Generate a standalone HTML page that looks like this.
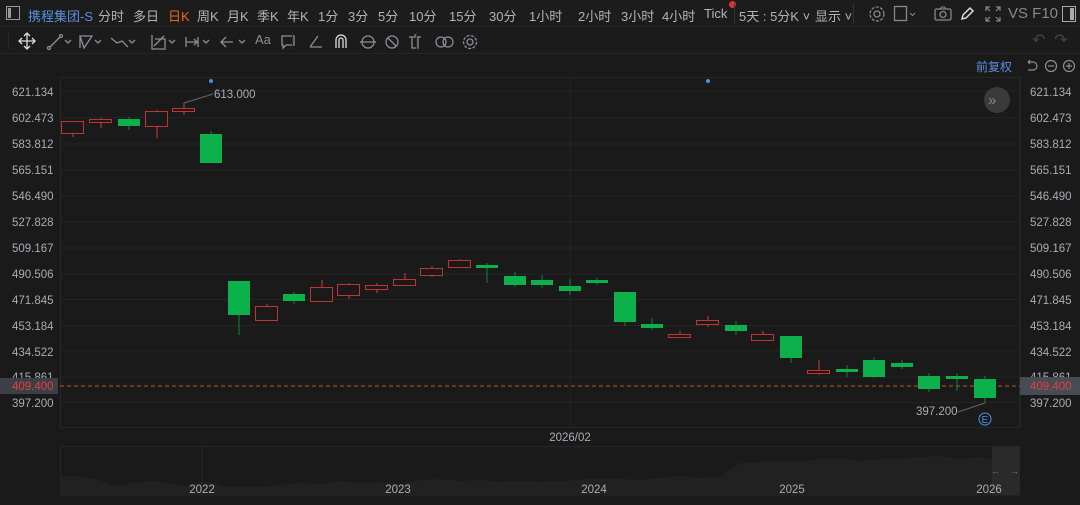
<!DOCTYPE html>
<html><head><meta charset="utf-8"><style>
*{margin:0;padding:0;box-sizing:border-box}
body{width:1080px;height:505px;background:#1a1a1a;font-family:"Liberation Sans","Noto Sans CJK SC",sans-serif;overflow:hidden;position:relative;color:#b8bcc4}
.bar1{position:absolute;left:0;top:0;width:1080px;height:27px;background:#1c1c1c;border-bottom:1px solid #262626}
.bar2{position:absolute;left:0;top:27px;width:1080px;height:27px;background:#1b1b1b;border-bottom:1px solid #262626}
.t{position:absolute;top:6px;font-size:13px;color:#b0b4bc;white-space:nowrap}
</style></head><body>
<div class="bar1">
<svg style="position:absolute;left:6px;top:6px" width="14" height="14"><rect x="0.5" y="0.5" width="13" height="13" fill="none" stroke="#999" /><rect x="2" y="2" width="3" height="10" fill="#999"/></svg>
<span class="t" style="left:28px;color:#5a8fe0">携程集团-S</span>
<span class="t" style="left:98px">分时</span>
<span class="t" style="left:133px">多日</span>
<span class="t" style="left:168px;color:#f0641e">日K</span>
<span class="t" style="left:197px">周K</span>
<span class="t" style="left:227px">月K</span>
<span class="t" style="left:257px">季K</span>
<span class="t" style="left:287px">年K</span>
<span class="t" style="left:318px">1分</span>
<span class="t" style="left:348px">3分</span>
<span class="t" style="left:378px">5分</span>
<span class="t" style="left:409px">10分</span>
<span class="t" style="left:449px">15分</span>
<span class="t" style="left:489px">30分</span>
<span class="t" style="left:529px">1小时</span>
<span class="t" style="left:578px">2小时</span>
<span class="t" style="left:621px">3小时</span>
<span class="t" style="left:662px">4小时</span>
<span class="t" style="left:704px">Tick</span>
<div style="position:absolute;left:729px;top:1px;width:7px;height:7px;border-radius:50%;background:#d33"></div>
<div style="position:absolute;left:734px;top:4px;width:1px;height:20px;background:#333"></div>
<span class="t" style="left:739px">5天 : 5分K ˅</span>
<span class="t" style="left:815px">显示 ˅</span>
<div style="position:absolute;left:853px;top:4px;width:1px;height:20px;background:#333"></div>
<svg style="position:absolute;left:868px;top:5px" width="18" height="18"><circle cx="9" cy="9" r="3" fill="none" stroke="#888" stroke-width="1.3"/><circle cx="9" cy="9" r="7" fill="none" stroke="#888" stroke-width="1.3" stroke-dasharray="3 1.5"/></svg>
<svg style="position:absolute;left:893px;top:5px" width="24" height="18"><rect x="1.5" y="1.5" width="12" height="14" fill="none" stroke="#888" stroke-width="1.3"/><path d="M17 8l2.5 2.5L22 8" stroke="#888" fill="none"/></svg>
<svg style="position:absolute;left:933px;top:5px" width="20" height="18"><rect x="2" y="4" width="16" height="11" rx="1.5" fill="none" stroke="#888" stroke-width="1.3"/><circle cx="10" cy="9.5" r="3" fill="none" stroke="#888" stroke-width="1.3"/><path d="M7 4l1.5-2h3L13 4" stroke="#888" fill="none"/></svg>
<svg style="position:absolute;left:958px;top:5px" width="18" height="18"><path d="M4 14l1-4 7-7 3 3-7 7z" fill="none" stroke="#ddd" stroke-width="1.5"/></svg>
<svg style="position:absolute;left:984px;top:5px" width="18" height="18"><path d="M2 6V2h4M12 2h4v4M16 12v4h-4M6 16H2v-4M2 2l4 4M16 2l-4 4M16 16l-4-4M2 16l4-4" stroke="#888" fill="none" stroke-width="1.2"/></svg>
<span class="t" style="left:1008px;font-size:15px;top:5px;color:#888">VS F10</span>
<svg style="position:absolute;left:1062px;top:6px" width="14" height="16"><rect x="0.5" y="0.5" width="13" height="15" fill="none" stroke="#aaa"/><rect x="8" y="2" width="4" height="12" fill="#aaa"/></svg>
</div>
<div class="bar2">
<svg style="position:absolute;left:14px;top:3px" width="480" height="22" fill="none" stroke="#8a8e96" stroke-width="1.3">
<path d="M13 3v16M5 11h16M10 6l3-3 3 3M10 16l3 3 3-3M8 8l-3 3 3 3M18 8l3 3-3 3" stroke="#ddd"/>
<path d="M36 17l10-10" /><circle cx="35" cy="18" r="1.5"/><circle cx="47" cy="6" r="1.5"/><path d="M51 10l3 3 3-3"/>
<path d="M66 6h12l-8 12zM66 6v12" /><path d="M81 10l3 3 3-3"/>
<path d="M97 8l6 5 5-2 6 6"/><path d="M115 10l3 3 3-3"/>
<path d="M138 5v14h14M140 16l10-10M141 9h10v9"/><path d="M155 10l3 3 3-3"/>
<path d="M172 7v10M172 12h12M184 7v10M180 9l3 3-3 3"/><path d="M189 10l3 3 3-3"/>
<path d="M207 12h12M212 7l-5 5 5 5"/><path d="M225 10l3 3 3-3"/>
<path d="M268 6h12v9h-8l-3 3v-3h-1z"/>
<path d="M296 17l8-11M296 17h12"/>
<path d="M322 18v-8a5 5 0 0 1 10 0v8M325 18v-8a2 2 0 0 1 4 0v8" stroke="#ddd"/>
<circle cx="354" cy="12" r="6"/><path d="M346 12h16"/>
<circle cx="378" cy="12" r="6"/><path d="M374 8l8 8"/>
<path d="M395 7h12M398 7v11h6V7M400 5h2"/>
<circle cx="427" cy="12" r="5"/><circle cx="434" cy="12" r="5"/>
<circle cx="456" cy="12" r="3"/><circle cx="456" cy="12" r="6.5" stroke-dasharray="3 1.5"/>
</svg>
<span style="position:absolute;left:255px;top:5px;font-size:13px;color:#8a8e96">Aa</span>
<div style="position:absolute;left:8px;top:5px;width:1px;height:17px;background:#2a2a2a"></div>
<div style="position:absolute;left:292px;top:5px;width:1px;height:17px;background:#2a2a2a"></div>
<div style="position:absolute;left:416px;top:5px;width:1px;height:17px;background:#2a2a2a"></div>
<span style="position:absolute;left:1032px;top:3px;color:#444;font-size:16px">↶ &nbsp;↷</span>
</div>
<span style="position:absolute;left:976px;top:58px;font-size:12px;color:#5a8fe0">前复权</span>
<svg style="position:absolute;left:1024px;top:58px" width="56" height="16" fill="none" stroke="#8a8e96" stroke-width="1.2"><path d="M4 4h5a4 4 0 0 1 0 8H4M4 4l2-2M4 4l2 2"/><circle cx="27" cy="8" r="5.5"/><path d="M24 8h6"/><circle cx="45" cy="8" r="5.5"/><path d="M42 8h6M45 5v6"/></svg>
<svg style="position:absolute;left:0;top:0" width="1080" height="505" font-family="Liberation Sans" font-size="11.5">
<rect x="60.5" y="77.5" width="959" height="350" fill="none" stroke="#262626"/>
<line x1="1020" y1="77" x2="1020" y2="427" stroke="#2a2a2a"/>
<g stroke="#242424">
<line x1="60" y1="91" x2="1020" y2="91"/><line x1="60" y1="117.5" x2="1020" y2="117.5"/><line x1="60" y1="144" x2="1020" y2="144"/><line x1="60" y1="170" x2="1020" y2="170"/><line x1="60" y1="196" x2="1020" y2="196"/><line x1="60" y1="222" x2="1020" y2="222"/><line x1="60" y1="248" x2="1020" y2="248"/><line x1="60" y1="274" x2="1020" y2="274"/><line x1="60" y1="299.5" x2="1020" y2="299.5"/><line x1="60" y1="325.5" x2="1020" y2="325.5"/><line x1="60" y1="351" x2="1020" y2="351"/><line x1="60" y1="377" x2="1020" y2="377"/><line x1="60" y1="402.5" x2="1020" y2="402.5"/>
<line x1="570" y1="77" x2="570" y2="427"/>
</g>
<g fill="#a8acb4">
<text x="12" y="96">621.134</text><text x="12" y="122">602.473</text><text x="12" y="148">583.812</text><text x="12" y="174">565.151</text><text x="12" y="200">546.490</text><text x="12" y="226">527.828</text><text x="12" y="252">509.167</text><text x="12" y="278">490.506</text><text x="12" y="304">471.845</text><text x="12" y="330">453.184</text><text x="12" y="356">434.522</text><text x="12" y="381">415.861</text><text x="12" y="407">397.200</text>
<text x="1030" y="96">621.134</text><text x="1030" y="122">602.473</text><text x="1030" y="148">583.812</text><text x="1030" y="174">565.151</text><text x="1030" y="200">546.490</text><text x="1030" y="226">527.828</text><text x="1030" y="252">509.167</text><text x="1030" y="278">490.506</text><text x="1030" y="304">471.845</text><text x="1030" y="330">453.184</text><text x="1030" y="356">434.522</text><text x="1030" y="381">415.861</text><text x="1030" y="407">397.200</text>
</g>
<rect x="0" y="378" width="58" height="16" fill="#3c4046"/>
<text x="12" y="390" fill="#e04040">409.400</text>
<rect x="1020" y="377" width="60" height="18" fill="#474c54"/>
<text x="1030" y="390" fill="#e04040">409.400</text>
<line x1="60" y1="386" x2="1020" y2="386" stroke="#b85a28" stroke-dasharray="4 3"/>
<circle cx="211" cy="81" r="2" fill="#4a8ef0"/><circle cx="708" cy="81" r="2" fill="#4a8ef0"/>
<line x1="184" y1="103" x2="213" y2="94" stroke="#666"/>
<text x="214" y="98" fill="#a8acb4">613.000</text>
<line x1="985" y1="403" x2="958" y2="412" stroke="#666"/>
<text x="916" y="415" fill="#a8acb4">397.200</text>
<circle cx="985" cy="419" r="6" fill="none" stroke="#4a8ef0"/><text x="981.5" y="423" fill="#4a8ef0" font-size="10">E</text>
<circle cx="997" cy="100" r="13" fill="#3a3a3a"/><text x="988" y="105" fill="#888" font-size="15">»</text>
<g id="c"></g>
<text x="570" y="441" fill="#a8acb4" text-anchor="middle">2026/02</text>
<rect x="60.5" y="446.5" width="959" height="49" fill="none" stroke="#262626"/>
<path d="M60 496 L60 478 L66 476 L72 477 L78 476 L86 477 L95 479 L110 484 L120 486 L130 483 L145 482 L158 481 L170 484 L185 486 L200 482 L215 483 L225 487 L240 486 L260 487 L280 485 L300 483 L320 484 L340 481 L360 483 L380 482 L400 484 L420 480 L440 479 L460 481 L480 480 L500 482 L520 481 L540 482 L560 481 L580 480 L600 478 L620 479 L640 480 L660 478 L680 476 L700 478 L720 477 L740 463 L760 462 L780 461 L800 462 L820 459 L840 458 L860 461 L880 459 L900 459 L920 457 L940 456 L960 459 L980 457 L1000 460 L1020 462 L1020 496 Z" fill="#212121"/>
<rect x="992" y="447" width="28" height="48" fill="#2a2a2a"/>
<text x="991" y="474" fill="#777" font-size="9">←</text><text x="1010" y="474" fill="#777" font-size="9">→</text>
<line x1="202" y1="447" x2="202" y2="495" stroke="#262626"/>
<g fill="#a8acb4" text-anchor="middle"><text x="202" y="493">2022</text><text x="398" y="493">2023</text><text x="594" y="493">2024</text><text x="792" y="493">2025</text><text x="989" y="493">2026</text></g>
</svg>
<script>
var d=[[73,'r',121,133,121,137],[101,'r',119,122,118,128],[129,'g',119,126,117,130],[157,'r',111,126,110,138],[184,'r',108,111,103,115],[211,'g',134,163,131,163],[239,'g',281,315,281,335],[267,'r',306,320,304,321],[294,'g',294,301,292,304],[322,'r',287,301,280,301],[349,'r',284,295,283,299],[377,'r',285,289,283,293],[405,'r',279,285,273,285],[432,'r',268,275,266,277],[460,'r',260,267,259,267],[487,'g',265,268,263,283],[515,'g',276,285,272,287],[542,'g',280,285,275,288],[570,'g',286,291,279,295],[597,'g',280,283,278,285],[625,'g',292,322,292,326],[652,'g',324,328,318,330],[680,'r',334,337,331,338],[708,'r',320,324,316,327],[736,'g',325,331,321,335],[763,'r',334,340,331,340],[791,'g',336,358,336,363],[819,'r',370,373,360,375],[847,'g',369,372,365,377],[874,'g',360,377,357,378],[902,'g',363,367,360,369],[929,'g',376,389,373,392],[957,'g',376,379,373,391],[985,'g',379,398,376,403]];
var s='';d.forEach(function(c){var x=c[0],col=c[1]=='r'?'#d23a3a':'#0db14b';
s+='<line x1="'+x+'" y1="'+c[4]+'" x2="'+x+'" y2="'+c[5]+'" stroke="'+(c[1]=='r'?'#d23a3a':'#0a8a3a')+'"/>';
if(c[1]=='r')s+='<rect x="'+(x-11.5)+'" y="'+(c[2]+0.5)+'" width="22" height="'+Math.max(c[3]-c[2],2)+'" fill="#1a1a1a" stroke="#c03434"/>';
else s+='<rect x="'+(x-11)+'" y="'+c[2]+'" width="22" height="'+Math.max(c[3]-c[2],3)+'" fill="'+col+'"/>';});
document.getElementById('c').innerHTML=s;
</script>
</body></html>
